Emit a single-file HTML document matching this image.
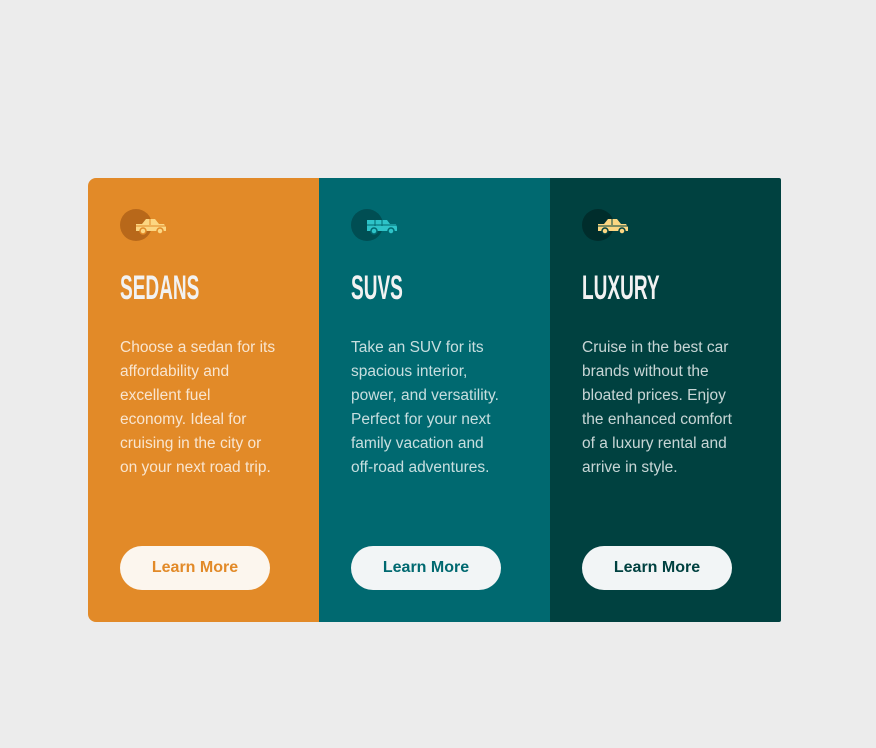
<!DOCTYPE html>
<html><head><meta charset="utf-8"><style>
body{margin:0;background:#ececec;width:876px;height:748px;position:relative;font-family:"Liberation Sans",sans-serif;}
.card{position:absolute;top:178px;width:231px;height:444px;}
.c1{left:88px;background:#e28a28;border-radius:8px 0 0 8px}
.c2{left:319px;background:#006970}
.c3{left:550px;background:#004140;width:231px;border-radius:0 2px 2px 0}
.ic{position:absolute;left:32px;top:31px;width:32px;height:32px;border-radius:50%}
.car{position:absolute;left:46px;top:38px}
h2{position:absolute;left:32px;top:90px;margin:0;font-size:34px;line-height:40px;font-weight:bold;color:#f2f2f2;transform:scaleX(.56);transform-origin:left top;letter-spacing:0}
p{position:absolute;left:32px;top:158px;margin:0;width:158px;font-size:15.5px;line-height:24px;color:rgba(255,255,255,.78)}
.b{position:absolute;left:32px;top:368px;width:150px;height:44px;border-radius:22px;text-align:center;line-height:44px;font-weight:bold;font-size:16px;background:#f2f5f6}
</style></head><body>
<div class="card c1"><div class="ic" style="background:#b8681a"></div>
<svg class="car" width="34" height="20" viewBox="0 0 34 20"><path d="M2 8h6l4-5h9l4 5h5l2 3v4H2z" fill="#fcd682"/><circle cx="9" cy="15" r="3" fill="#fcd682" stroke="#e28a28" stroke-width="1.5"/><circle cx="26" cy="15" r="3" fill="#fcd682" stroke="#e28a28" stroke-width="1.5"/><path d="M16 3v6M2 10h30" stroke="#e28a28" stroke-width="1"/></svg>
<h2>SEDANS</h2><p>Choose a sedan for its affordability and excellent fuel economy. Ideal for cruising in the city or on your next road trip.</p><div class="b" style="background:#fcf6ee;color:#e28a28">Learn More</div></div>
<div class="card c2"><div class="ic" style="background:#004e53"></div>
<svg class="car" width="34" height="20" viewBox="0 0 34 20"><path d="M2 4h20l3 4h6l1 3v4H2z" fill="#2ec3c8"/><circle cx="9" cy="15" r="3" fill="#2ec3c8" stroke="#006970" stroke-width="1.5"/><circle cx="26" cy="15" r="3" fill="#2ec3c8" stroke="#006970" stroke-width="1.5"/><path d="M10 4v6M17 4v6M2 9h30" stroke="#006970" stroke-width="1"/></svg>
<h2>SUVS</h2><p>Take an SUV for its spacious interior, power, and versatility. Perfect for your next family vacation and off-road adventures.</p><div class="b" style="color:#006970">Learn More</div></div>
<div class="card c3"><div class="ic" style="background:#002d2c"></div>
<svg class="car" width="34" height="20" viewBox="0 0 34 20"><path d="M2 8h6l4-5h9l4 5h5l2 3v4H2z" fill="#fcd682"/><circle cx="9" cy="15" r="3" fill="#fcd682" stroke="#004140" stroke-width="1.5"/><circle cx="26" cy="15" r="3" fill="#fcd682" stroke="#004140" stroke-width="1.5"/><path d="M16 3v6M2 10h30" stroke="#004140" stroke-width="1"/></svg>
<h2>LUXURY</h2><p>Cruise in the best car brands without the bloated prices. Enjoy the enhanced comfort of a luxury rental and arrive in style.</p><div class="b" style="color:#004140">Learn More</div></div>
</body></html>
